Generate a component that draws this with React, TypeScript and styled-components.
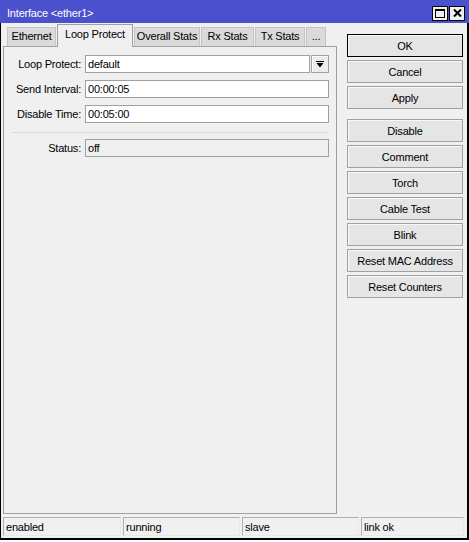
import styled, { createGlobalStyle } from 'styled-components'

const GlobalStyle = createGlobalStyle`
  html, body {
    margin: 0;
    padding: 0;
    background: #fff;
  }
  body {
    font-family: "Liberation Sans", Arial, sans-serif;
    font-size: 11px;
    letter-spacing: -0.2px;
    color: #000;
  }
  * {
    box-sizing: border-box;
  }
`

const Window = styled.div`
  width: 469px;
  height: 540px;
  display: flex;
  flex-direction: column;
  background: #f0f0f0;
`
const TitleBar = styled.div`
  height: 23px;
  flex: none;
  display: flex;
  align-items: center;
  padding: 3px 4px 0 7px;
  background: #4b50cd;
  color: #fff;
`
const Title = styled.div`
  flex: 1;
`
const TitleButtons = styled.div`
  display: flex;
  gap: 1px;
`
const TitleButton = styled.div`
  width: 16px;
  height: 15px;
  border: 1px solid #000;
  background: #f0f0f0;
  display: flex;
  align-items: center;
  justify-content: center;
`
const Frame = styled.div`
  flex: 1;
  display: flex;
  flex-direction: column;
  border-left: 1px solid #000;
  border-right: 2px solid #000;
  border-bottom: 2px solid #000;
`
const Main = styled.div`
  flex: 1;
  display: flex;
  gap: 10px;
  padding: 0 4px 0 2px;
`
const LeftCol = styled.div`
  width: 334px;
  display: flex;
  flex-direction: column;
`
const TabRow = styled.div`
  height: 23px;
  display: flex;
  align-items: flex-end;
  gap: 1px;
  padding-left: 4px;
  position: relative;
  z-index: 1;
`
const Tab = styled.div<{ $w: number; $active?: boolean }>`
  width: ${p => p.$w}px;
  height: ${p => (p.$active ? 23 : 19)}px;
  margin-bottom: ${p => (p.$active ? -1 : 0)}px;
  padding-top: ${p => (p.$active ? 3 : 2)}px;
  display: flex;
  justify-content: center;
  align-items: flex-start;
  background: ${p => (p.$active ? '#f0f0f0' : '#dadada')};
  border: 1px solid ${p => (p.$active ? '#a0a0a0' : '#c4c4c4')};
  border-bottom: none;
  white-space: nowrap;
`
const Panel = styled.div`
  flex: 1;
  border: 1px solid #a0a0a0;
  padding: 8px 7px 0 0;
`
const FieldRow = styled.div`
  display: flex;
  align-items: center;
  height: 18px;
  margin-bottom: 7px;
`
const Label = styled.div`
  width: 77px;
  margin-right: 4px;
  text-align: right;
  white-space: nowrap;
`
const Input = styled.div<{ $readonly?: boolean }>`
  flex: 1;
  height: 18px;
  display: flex;
  align-items: center;
  padding-left: 2px;
  border: 1px solid #a0a0a0;
  background: ${p => (p.$readonly ? '#f0f0f0' : '#fff')};
`
const DropButton = styled.div`
  width: 18px;
  height: 18px;
  margin-left: 1px;
  border: 1px solid #a0a0a0;
  background: #ececec;
  box-shadow: inset 1px 1px #fff;
  display: flex;
  align-items: center;
  justify-content: center;
`
const Separator = styled.div`
  height: 1px;
  margin: 9px 0 6px 8px;
  background: #d9d9d9;
`
const RightCol = styled.div`
  width: 116px;
  display: flex;
  flex-direction: column;
  gap: 3px;
  padding-top: 11px;
`
const Button = styled.div<{ $default?: boolean; $group?: boolean }>`
  height: 23px;
  margin-top: ${p => (p.$group ? 7 : 0)}px;
  display: flex;
  align-items: center;
  justify-content: center;
  background: #e5e5e5;
  border: 1px solid ${p => (p.$default ? '#000' : '#a0a0a0')};
  box-shadow: inset 1px 1px #f8f8f8;
  white-space: nowrap;
`
const StatusBar = styled.div`
  flex: none;
  display: grid;
  grid-template-columns: 118px 117px 117px 103px;
  gap: 2px;
  padding: 3px 3px 2px 2px;
`
const StatusCell = styled.div`
  height: 19px;
  display: flex;
  align-items: center;
  padding-left: 2px;
  border: 1px solid #b0b0b0;
  border-right-color: #e8e8e8;
  border-bottom-color: #e8e8e8;
`

const tabs = [
  { name: 'Ethernet', w: 49 },
  { name: 'Loop Protect', w: 76, active: true },
  { name: 'Overall Stats', w: 66 },
  { name: 'Rx Stats', w: 53 },
  { name: 'Tx Stats', w: 50 },
  { name: '...', w: 20 },
]

const buttons = [
  { label: 'OK', def: true },
  { label: 'Cancel' },
  { label: 'Apply' },
  { label: 'Disable', group: true },
  { label: 'Comment' },
  { label: 'Torch' },
  { label: 'Cable Test' },
  { label: 'Blink' },
  { label: 'Reset MAC Address' },
  { label: 'Reset Counters' },
]

const status = ['enabled', 'running', 'slave', 'link ok']

const App: React.FC = () => {
  return (
    <>
      <GlobalStyle />
      <Window>
        <TitleBar>
          <Title>Interface &lt;ether1&gt;</Title>
          <TitleButtons>
            <TitleButton>
              <svg width="10" height="9" viewBox="0 0 10 9">
                <rect x="0.5" y="0.5" width="9" height="8" fill="none" stroke="#000" />
                <rect x="0" y="0" width="10" height="2" fill="#000" />
              </svg>
            </TitleButton>
            <TitleButton>
              <svg width="9" height="8" viewBox="0 0 9 8">
                <path d="M1 0.5 L8 7.5 M8 0.5 L1 7.5" stroke="#000" strokeWidth="2" />
              </svg>
            </TitleButton>
          </TitleButtons>
        </TitleBar>
        <Frame>
          <Main>
            <LeftCol>
              <TabRow>
                {tabs.map(t => (
                  <Tab key={t.name} $w={t.w} $active={t.active}>
                    {t.name}
                  </Tab>
                ))}
              </TabRow>
              <Panel>
                <FieldRow>
                  <Label>Loop Protect:</Label>
                  <Input>default</Input>
                  <DropButton>
                    <svg width="8" height="7" viewBox="0 0 8 7">
                      <rect x="0" y="0" width="8" height="1" fill="#000" />
                      <path d="M0.5 2 H7.5 L4 6.5 Z" fill="#000" />
                    </svg>
                  </DropButton>
                </FieldRow>
                <FieldRow>
                  <Label>Send Interval:</Label>
                  <Input>00:00:05</Input>
                </FieldRow>
                <FieldRow>
                  <Label>Disable Time:</Label>
                  <Input>00:05:00</Input>
                </FieldRow>
                <Separator />
                <FieldRow>
                  <Label>Status:</Label>
                  <Input $readonly>off</Input>
                </FieldRow>
              </Panel>
            </LeftCol>
            <RightCol>
              {buttons.map(b => (
                <Button key={b.label} $default={b.def} $group={b.group}>
                  {b.label}
                </Button>
              ))}
            </RightCol>
          </Main>
          <StatusBar>
            {status.map(s => (
              <StatusCell key={s}>{s}</StatusCell>
            ))}
          </StatusBar>
        </Frame>
      </Window>
    </>
  )
}

export default App
